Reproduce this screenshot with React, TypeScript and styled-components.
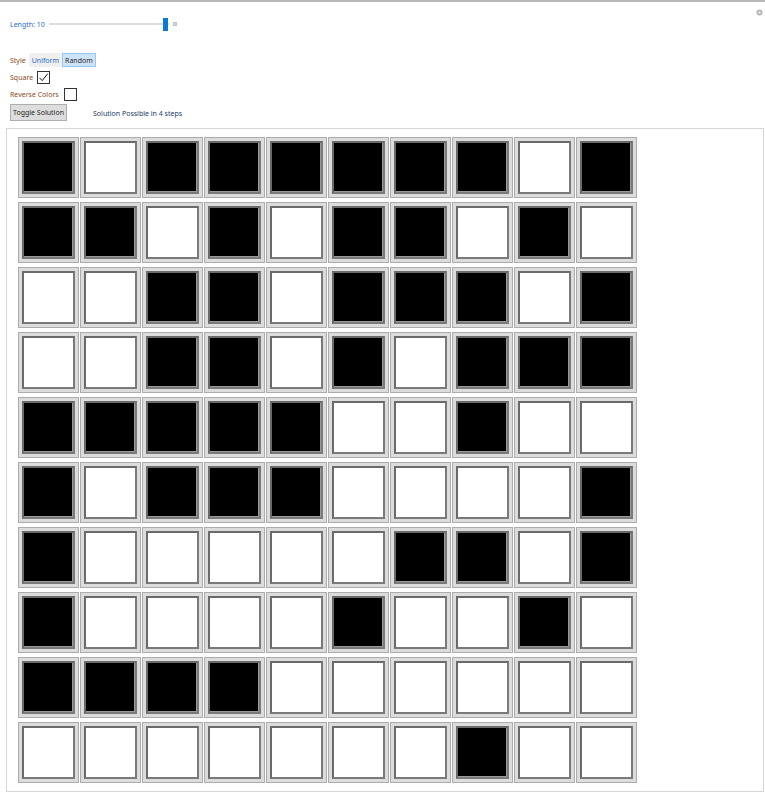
import React from "react";
import styled, { createGlobalStyle } from "styled-components";

const GlobalStyle = createGlobalStyle`
  html, body { margin: 0; padding: 0; background: #ffffff; }
  body { font-family: "Noto Sans", "Open Sans", sans-serif; }
`;

const GRID: number[][] = [
  [1, 0, 1, 1, 1, 1, 1, 1, 0, 1],
  [1, 1, 0, 1, 0, 1, 1, 0, 1, 0],
  [0, 0, 1, 1, 0, 1, 1, 1, 0, 1],
  [0, 0, 1, 1, 0, 1, 0, 1, 1, 1],
  [1, 1, 1, 1, 1, 0, 0, 1, 0, 0],
  [1, 0, 1, 1, 1, 0, 0, 0, 0, 1],
  [1, 0, 0, 0, 0, 0, 1, 1, 0, 1],
  [1, 0, 0, 0, 0, 1, 0, 0, 1, 0],
  [1, 1, 1, 1, 0, 0, 0, 0, 0, 0],
  [0, 0, 0, 0, 0, 0, 0, 1, 0, 0],
];

const Page = styled.div`
  position: relative;
  width: 765px;
  height: 796px;
  box-sizing: border-box;
  border-top: 2px solid #b9b9b9;
  display: flex;
  flex-direction: column;
  font-size: 7px;
  line-height: 1;
`;

const Gear = styled.div`
  position: absolute;
  top: 7px;
  right: 2px;
  width: 7px;
  height: 7px;
`;

const Header = styled.div`
  display: flex;
  align-items: center;
  height: 12px;
  margin-top: 16px;
  padding-left: 10px;
`;

const LengthLabel = styled.span`
  color: #2a6bc9;
  width: 39px;
`;

const Slider = styled.div`
  position: relative;
  width: 120px;
  height: 12px;
  display: flex;
  align-items: center;
`;

const Track = styled.div`
  width: 120px;
  height: 2px;
  background: #dcdcdc;
`;

const Thumb = styled.div`
  position: absolute;
  left: 114px;
  top: 0;
  width: 5px;
  height: 13px;
  background: #0a78d7;
`;

const Tick = styled.div`
  width: 4px;
  height: 4px;
  margin-left: 4px;
  background: #d2d2d2;
  border: 0.5px solid #c4c4c4;
  box-sizing: border-box;
`;

const Controls = styled.div`
  display: flex;
  flex-direction: column;
  padding-left: 10px;
  margin-top: 23px;
`;

const Row = styled.div<{ $h: number; $gap?: number; $mt?: number }>`
  display: flex;
  align-items: center;
  height: ${(p) => p.$h}px;
  gap: ${(p) => p.$gap ?? 3}px;
  margin-top: ${(p) => p.$mt ?? 0}px;
`;

const Label = styled.span`
  color: #8a4a1c;
`;

const Tabs = styled.div`
  display: flex;
  height: 14px;
  margin-left: 3px;
`;

const Tab = styled.div<{ $active?: boolean }>`
  display: flex;
  align-items: center;
  padding: 0 2px;
  box-sizing: border-box;
  height: 14px;
  color: ${(p) => (p.$active ? "#2b2b2b" : "#2a6bc9")};
  background: ${(p) => (p.$active ? "#cde4f7" : "#efefef")};
  border: 1px solid ${(p) => (p.$active ? "#99c8ee" : "#efefef")};
`;

const Box = styled.div`
  width: 13px;
  height: 13px;
  box-sizing: border-box;
  border: 1px solid #333;
  background: #fff;
  display: flex;
  align-items: center;
  justify-content: center;
`;

const Button = styled.div`
  width: 57px;
  height: 17px;
  box-sizing: border-box;
  background: #dddddd;
  border: 1px solid #adadad;
  display: flex;
  align-items: center;
  justify-content: center;
  color: #1e1e1e;
`;

const Status = styled.span`
  color: #203a66;
  margin-left: 26px;
  margin-top: 1px;
`;

const Board = styled.div`
  margin: 7px 1px 0 6px;
  height: 664px;
  box-sizing: border-box;
  border: 1px solid #d6d6d6;
  padding: 8px 0 0 11px;
  display: grid;
  grid-template-columns: repeat(10, 61px);
  grid-auto-rows: 61px;
  column-gap: 1px;
  row-gap: 4px;
  align-content: start;
`;

const Cell = styled.div`
  box-sizing: border-box;
  border: 1px solid #acacac;
  background: #dcdcdc;
  padding: 3px;
`;

const Face = styled.div<{ $on: boolean }>`
  width: 100%;
  height: 100%;
  box-sizing: border-box;
  border: 2px solid #6a6a6a;
  border-bottom-color: #7a7a7a;
  border-right-color: #7a7a7a;
  background: ${(p) => (p.$on ? "#000" : "#fff")};
  box-shadow: ${(p) => (p.$on ? "inset -1px -1px 0 #9a9a9a" : "none")};
`;

export default function App() {
  return (
    <>
      <GlobalStyle />
      <Page>
        <Gear>
          <svg width="7" height="7" viewBox="0 0 7 7">
            <circle cx="3.5" cy="3.5" r="3" fill="#b5b5b5" />
            <circle cx="3.5" cy="3.5" r="1.2" fill="#e6e6e6" />
          </svg>
        </Gear>
        <Header>
          <LengthLabel>Length: 10</LengthLabel>
          <Slider>
            <Track />
            <Thumb />
          </Slider>
          <Tick />
        </Header>
        <Controls>
          <Row $h={14} $gap={0}>
            <Label>Style</Label>
            <Tabs>
              <Tab>Uniform</Tab>
              <Tab $active>Random</Tab>
            </Tabs>
          </Row>
          <Row $h={20} $gap={4}>
            <Label>Square</Label>
            <Box>
              <svg width="11" height="11" viewBox="0 0 11 11">
                <path d="M1.5 5.8 L4.2 8.6 L9.8 1.6" fill="none" stroke="#111" strokeWidth="1" />
              </svg>
            </Box>
          </Row>
          <Row $h={14} $gap={5}>
            <Label>Reverse Colors</Label>
            <Box />
          </Row>
          <Row $h={17} $gap={0} $mt={3}>
            <Button>Toggle Solution</Button>
            <Status>Solution Possible in 4 steps</Status>
          </Row>
        </Controls>
        <Board>
          {GRID.flatMap((row, r) =>
            row.map((v, c) => (
              <Cell key={`${r}-${c}`}>
                <Face $on={v === 1} />
              </Cell>
            ))
          )}
        </Board>
      </Page>
    </>
  );
}
